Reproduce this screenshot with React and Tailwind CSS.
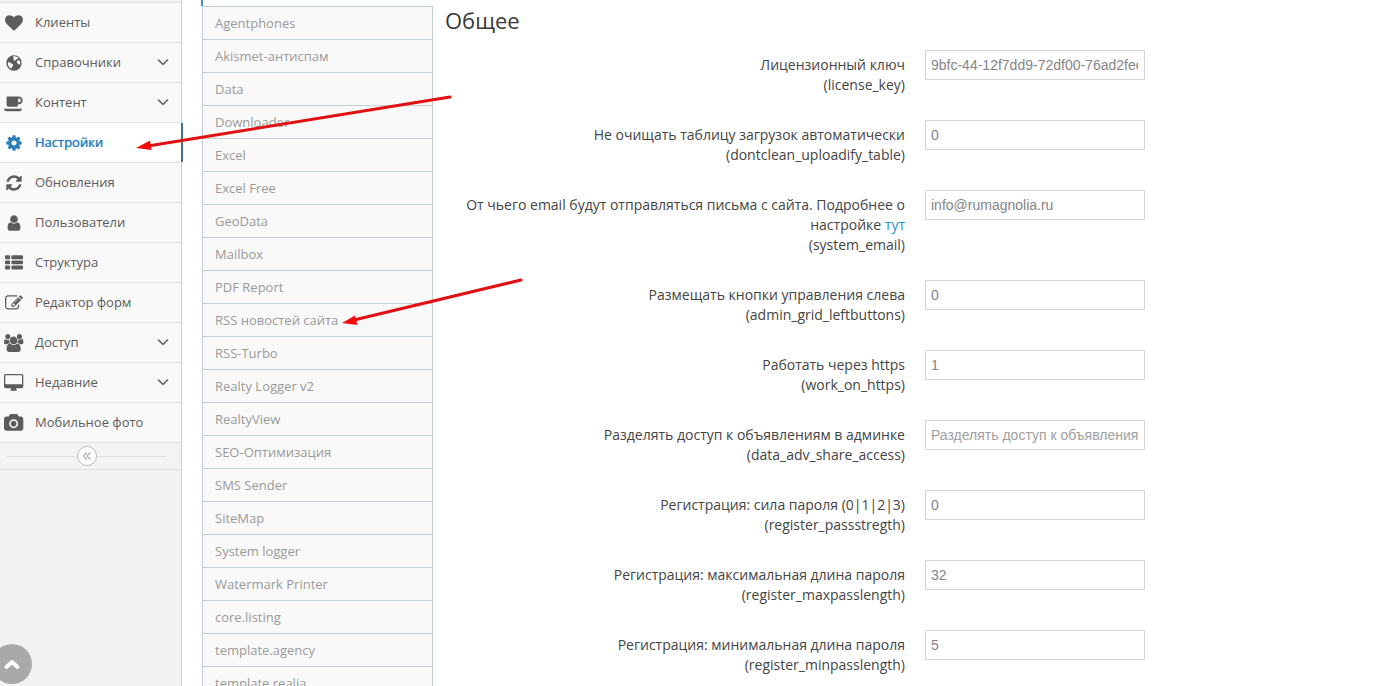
import React from 'react';
import clsx from 'clsx';

const ICONS = {
    heart: {
        width: 1792,
        d: 'M896 1664q-26 0-44-18l-624-602q-10-8-27.5-26t-55.5-65.5-68-97.5-53.5-121-23.5-138q0-220 127-344t351-124q62 0 126.5 21.5t120 58 95.5 68.5 76 68q36-36 76-68t95.5-68.5 120-58 126.5-21.5q224 0 351 124t127 344q0 221-229 450l-623 600q-18 18-44 18z',
    },
    globe: {
        width: 1792,
        d: 'M896 128a768 768 0 1 0 0 1536a768 768 0 1 0 0-1536zM760 250L900 220L1080 250L1240 330L1330 430L1250 520L1130 500L1060 600L960 690L880 640L900 540L800 480L860 380ZM1240 660L1380 620L1490 700L1530 880L1470 1040L1330 1010L1220 900L1160 780ZM340 800L480 840L600 930L760 1000L820 1110L740 1230L680 1390L560 1430L430 1320L330 1180L270 980Z',
    },
    coffee: {
        width: 1920,
        d: 'M1664 640q0-80-56-136t-136-56h-64v384h64q80 0 136-56t56-136zm-1664 832h1792q0 106-75 181t-181 75h-1280q-106 0-181-75t-75-181zm1856-832q0 159-112.5 271.5t-271.5 112.5h-64v32q0 92-66 158t-158 66h-704q-92 0-158-66t-66-158v-736q0-26 19-45t45-19h1152q159 0 271.5 112.5t112.5 271.5z',
    },
    cog: {
        width: 1792,
        d: 'M1152 896q0-106-75-181t-181-75-181 75-75 181 75 181 181 75 181-75 75-181zm512-109v222q0 12-8 23t-20 13l-185 28q-19 54-39 91 35 50 107 138 10 12 10 25t-9 23q-27 37-99 108t-94 71q-12 0-26-9l-138-108q-44 23-91 38-16 136-29 186-7 28-36 28h-222q-14 0-24.5-8.5t-11.5-21.5l-28-184q-49-16-90-37l-141 107q-10 9-25 9-14 0-25-11-126-114-165-168-7-10-7-23 0-12 8-23 15-21 51-66.5t54-70.5q-27-50-41-99l-183-27q-13-2-21-12.5t-8-23.5v-222q0-12 8-23t19-13l186-28q14-46 39-92-40-57-107-138-10-12-10-24 0-10 9-23 26-36 98.5-107.5t94.5-71.5q13 0 26 10l138 107q44-23 91-38 16-136 29-186 7-28 36-28h222q14 0 24.5 8.5t11.5 21.5l28 184q49 16 90 37l142-107q9-9 24-9 13 0 25 10 129 119 165 170 7 8 7 22 0 12-8 23-15 21-51 66.5t-54 70.5q26 50 41 98l183 28q13 2 21 12.5t8 23.5z',
    },
    refresh: {
        width: 1792,
        d: 'M1639 1056q0 5-1 7-64 268-268 434.5t-478 166.5q-146 0-282.5-55t-243.5-157l-129 129q-19 19-45 19t-45-19-19-45v-448q0-26 19-45t45-19h448q26 0 45 19t19 45-19 45l-137 137q71 66 161 102t187 36q134 0 250-65t186-179q11-17 53-117 8-23 30-23h192q13 0 22.5 9.5t9.5 22.5zm25-800v448q0 26-19 45t-45 19h-448q-26 0-45-19t-19-45 19-45l138-138q-148-137-349-137-134 0-250 65t-186 179q-11 17-53 117-8 23-30 23h-199q-13 0-22.5-9.5t-9.5-22.5v-7q65-268 270-434.5t480-166.5q146 0 284 55.5t245 156.5l130-129q19-19 45-19t45 19 19 45z',
    },
    user: {
        width: 1792,
        d: 'M1536 1399q0 109-62.5 187t-150.5 78h-854q-88 0-150.5-78t-62.5-187q0-85 8.5-160.5t31.5-152 58.5-131 94-89 134.5-34.5q131 128 313 128t313-128q76 0 134.5 34.5t94 89 58.5 131 31.5 152 8.5 160.5zm-256-887q0 159-112.5 271.5t-271.5 112.5-271.5-112.5-112.5-271.5 112.5-271.5 271.5-112.5 271.5 112.5 112.5 271.5z',
    },
    list: {
        width: 1792,
        d: 'M96 1152h320q96 0 96 96v192q0 96-96 96h-320q-96 0-96-96v-192q0-96 96-96zM96 640h320q96 0 96 96v192q0 96-96 96h-320q-96 0-96-96v-192q0-96 96-96zM96 128h320q96 0 96 96v192q0 96-96 96h-320q-96 0-96-96v-192q0-96 96-96zM736 1152h960q96 0 96 96v192q0 96-96 96h-960q-96 0-96-96v-192q0-96 96-96zM736 640h960q96 0 96 96v192q0 96-96 96h-960q-96 0-96-96v-192q0-96 96-96zM736 128h960q96 0 96 96v192q0 96-96 96h-960q-96 0-96-96v-192q0-96 96-96z',
    },
    edit: {
        width: 1792,
        d: 'M888 1184l116-116-152-152-116 116v56h96v96h56zm440-720q-16-16-33 1l-350 350q-17 17-1 33t33-1l350-350q17-17 1-33zm80 594v190q0 119-84.5 203.5t-203.5 84.5h-832q-119 0-203.5-84.5t-84.5-203.5v-832q0-119 84.5-203.5t203.5-84.5h832q63 0 117 25 15 7 18 23 3 17-9 29l-49 49q-14 14-32 8-23-6-45-6h-832q-66 0-113 47t-47 113v832q0 66 47 113t113 47h832q66 0 113-47t47-113v-126q0-13 9-22l64-64q15-15 35-7t20 29zm-96-738l288 288-672 672h-288v-288zm444 132l-92 92-288-288 92-92q28-28 68-28t68 28l152 152q28 28 28 68t-28 68z',
    },
    users: {
        width: 1920,
        d: 'M593 896q-162 5-265 128h-134q-82 0-138-40.5t-56-118.5q0-353 124-353 6 0 43.5 21t97.5 42.5 119 21.5q67 0 133-23-5 37-5 66 0 159 90 293zm1071 637q0 120-73 189.5t-194 69.5h-874q-121 0-194-69.5t-73-189.5q0-53 3.5-103.5t14-109 26.5-108.5 43-97.5 62-81 85.5-53.5 111.5-20q10 0 43 21.5t73 48 107 48 135 21.5 135-21.5 107-48 73-48 43-21.5q61 0 111.5 20t85.5 53.5 62 81 43 97.5 26.5 108.5 14 109 3.5 103.5zm-1024-1277q0 106-75 181t-181 75-181-75-75-181 75-181 181-75 181 75 75 181zm704 384q0 159-112.5 271.5t-271.5 112.5-271.5-112.5-112.5-271.5 112.5-271.5 271.5-112.5 271.5 112.5 112.5 271.5zm576 225q0 78-56 118.5t-138 40.5h-134q-103-123-265-128 90-134 90-293 0-29-5-66 66 23 133 23 59 0 119-21.5t97.5-42.5 43.5-21q124 0 124 353zm-128-609q0 106-75 181t-181 75-181-75-75-181 75-181 181-75 181 75 75 181z',
    },
    desktop: {
        width: 1920,
        d: 'M1792 992v-832q0-13-9.5-22.5t-22.5-9.5h-1600q-13 0-22.5 9.5t-9.5 22.5v832q0 13 9.5 22.5t22.5 9.5h1600q13 0 22.5-9.5t9.5-22.5zm128-832v1088q0 66-47 113t-113 47h-544q0 37 16 77.5t32 71 16 43.5q0 26-19 45t-45 19h-512q-26 0-45-19t-19-45q0-14 16-44t32-70 16-78h-544q-66 0-113-47t-47-113v-1088q0-66 47-113t113-47h1600q66 0 113 47t47 113z',
    },
    camera: {
        width: 1920,
        d: 'M960 672q119 0 203.5 84.5t84.5 203.5-84.5 203.5-203.5 84.5-203.5-84.5-84.5-203.5 84.5-203.5 203.5-84.5zm704-416q106 0 181 75t75 181v896q0 106-75 181t-181 75h-1408q-106 0-181-75t-75-181v-896q0-106 75-181t181-75h224l51-136q19-49 69.5-84.5t103.5-35.5h512q53 0 103.5 35.5t69.5 84.5l51 136h224zm-704 1152q185 0 316.5-131.5t131.5-316.5-131.5-316.5-316.5-131.5-316.5 131.5-131.5 316.5 131.5 316.5 316.5 131.5z',
    },
};

const navItems = [
    { label: 'Клиенты', icon: 'heart' },
    { label: 'Справочники', icon: 'globe', submenu: true },
    { label: 'Контент', icon: 'coffee', submenu: true },
    { label: 'Настройки', icon: 'cog', active: true },
    { label: 'Обновления', icon: 'refresh' },
    { label: 'Пользователи', icon: 'user' },
    { label: 'Структура', icon: 'list' },
    { label: 'Редактор форм', icon: 'edit' },
    { label: 'Доступ', icon: 'users', submenu: true },
    { label: 'Недавние', icon: 'desktop', submenu: true },
    { label: 'Мобильное фото', icon: 'camera' },
];

const tabs = [
    'Agentphones',
    'Akismet-антиспам',
    'Data',
    'Downloader',
    'Excel',
    'Excel Free',
    'GeoData',
    'Mailbox',
    'PDF Report',
    'RSS новостей сайта',
    'RSS-Turbo',
    'Realty Logger v2',
    'RealtyView',
    'SEO-Оптимизация',
    'SMS Sender',
    'SiteMap',
    'System logger',
    'Watermark Printer',
    'core.listing',
    'template.agency',
    'template.realia',
];

const fields = [
    { name: 'license_key', label: 'Лицензионный ключ', value: '9bfc-44-12f7dd9-72df00-76ad2feed' },
    { name: 'dontclean_uploadify_table', label: 'Не очищать таблицу загрузок автоматически', value: '0' },
    {
        name: 'system_email',
        label: (
            <>
                От чьего email будут отправляться письма с сайта. Подробнее о настройке{' '}
                <a href="#email" className="text-[#2a8fcb]">тут</a>
            </>
        ),
        value: 'info@rumagnolia.ru',
    },
    { name: 'admin_grid_leftbuttons', label: 'Размещать кнопки управления слева', value: '0' },
    { name: 'work_on_https', label: 'Работать через https', value: '1' },
    {
        name: 'data_adv_share_access',
        label: 'Разделять доступ к объявлениям в админке',
        value: '',
        placeholder: 'Разделять доступ к объявлениям в админке',
    },
    { name: 'register_passstregth', label: 'Регистрация: сила пароля (0|1|2|3)', value: '0' },
    { name: 'register_maxpasslength', label: 'Регистрация: максимальная длина пароля', value: '32' },
    { name: 'register_minpasslength', label: 'Регистрация: минимальная длина пароля', value: '5' },
];

const MenuIcon = ({ name }) => (
    <span className="flex w-7 shrink-0 justify-center">
        <svg
            viewBox={`0 0 ${ICONS[name].width} 1792`}
            className="h-[18px] w-auto overflow-visible"
            fill="currentColor"
            fillRule={name === 'globe' ? 'evenodd' : 'nonzero'}
            aria-hidden="true"
        >
            <path d={ICONS[name].d} />
        </svg>
    </span>
);

const Sidebar = () => (
    <aside className="w-[182px] shrink-0 border-r border-[#cccccc] bg-[#f2f2f2] pt-[2px] text-[13px] text-[#5c5c5c]">
        <nav>
            {navItems.map((item) => (
                <a
                    key={item.label}
                    href="#menu"
                    className={clsx(
                        'relative flex h-10 items-center gap-[7px] border-t border-[#e0e0e0]',
                        item.active ? 'bg-white text-[#2b7dbc]' : 'bg-[#f9f9f9]'
                    )}
                >
                    <MenuIcon name={item.icon} />
                    <span className={clsx('flex-1 whitespace-nowrap', item.active && '[text-shadow:0_0_1px_#2b7dbc]')}>
                        {item.label}
                    </span>
                    {item.submenu && (
                        <svg viewBox="0 0 12 10" className="mr-3 h-[10px] w-3" fill="none" stroke="currentColor" strokeWidth="1.4" aria-hidden="true">
                            <path d="M1 1.5L6 6.5L11 1.5" />
                        </svg>
                    )}
                    {item.active && <span className="absolute inset-y-0 -right-[2px] w-[2px] bg-[#3a7592]" />}
                </a>
            ))}
        </nav>
        <div className="flex h-7 items-center border-y border-[#e0e0e0] bg-[#f3f3f3] pl-[7px] pr-[14px]">
            <span className="h-px flex-1 bg-[#e0e0e0]" />
            <button
                type="button"
                aria-label="Свернуть меню"
                className="flex size-5 items-center justify-center rounded-full border border-[#bbbbbb] bg-white text-[#aaaaaa]"
            >
                <svg viewBox="0 0 10 10" className="size-[10px]" fill="none" stroke="currentColor" strokeWidth="1.2" aria-hidden="true">
                    <path d="M5 1.5L1.5 5L5 8.5M8.5 1.5L5 5L8.5 8.5" />
                </svg>
            </button>
            <span className="h-px flex-1 bg-[#e0e0e0]" />
        </div>
    </aside>
);

const TabList = () => (
    <div className="ml-5 w-[231px] shrink-0 text-[13px] text-[#999999]">
        <div className="-ml-px h-[6px] border-l-2 border-[#4c8fbd] bg-white" />
        <div className="border-x border-t border-[#c5cdd6]">
            {tabs.map((tab) => (
                <a key={tab} href="#tab" className="flex h-[33px] items-center border-b border-[#c5cdd6] bg-[#f9f9f9] pl-3 pt-[2px]">
                    {tab}
                </a>
            ))}
        </div>
    </div>
);

const Field = ({ name, label, value, placeholder }) => (
    <div className="mb-[25px] flex items-start gap-5">
        <label htmlFor={name} className="w-1/2 pt-[5px] text-right text-sm leading-5 text-[#444444]">
            {label}
            <br />({name})
        </label>
        <input
            id={name}
            type="text"
            defaultValue={value}
            placeholder={placeholder}
            className="h-[30px] w-[220px] border border-[#d5d5d5] bg-white pl-[5px] pr-[6px] font-['Liberation_Sans',sans-serif] text-sm text-[#858585] placeholder:text-[#a0a0a0]"
        />
    </div>
);

// Red pointers drawn over the page
const Arrows = () => (
    <svg className="pointer-events-none absolute left-0 top-0" width="540" height="340" fill="#f50a0a" aria-hidden="true">
        <path d="M450 97L148 146" stroke="#e01014" strokeWidth="3" strokeLinecap="round" />
        <path d="M136 148L150 140.5L151.5 150Z" />
        <path d="M521 280L354 320" stroke="#e01014" strokeWidth="3" strokeLinecap="round" />
        <path d="M342 323L355 315.5L357.5 325Z" />
    </svg>
);

const App = () => (
    <div className="relative flex h-screen overflow-hidden bg-white font-['Open_Sans',sans-serif]">
        <Sidebar />
        <TabList />
        <main className="min-w-0 flex-1 px-3">
            <h1 className="pt-1 text-[22px] leading-8 text-[#393939]">Общее</h1>
            <form className="pt-[14px]">
                {fields.map((field) => (
                    <Field key={field.name} {...field} />
                ))}
            </form>
        </main>
        <Arrows />
        <button
            type="button"
            aria-label="Наверх"
            className="fixed -left-2 bottom-[2px] flex size-10 items-center justify-center rounded-full bg-[#a9a9a9] text-white"
        >
            <svg viewBox="0 0 18 12" className="h-3 w-[18px]" fill="none" stroke="currentColor" strokeWidth="4" aria-hidden="true">
                <path d="M3.5 9L9 4L14.5 9" strokeLinecap="round" strokeLinejoin="round" />
            </svg>
        </button>
    </div>
);

export default App;
